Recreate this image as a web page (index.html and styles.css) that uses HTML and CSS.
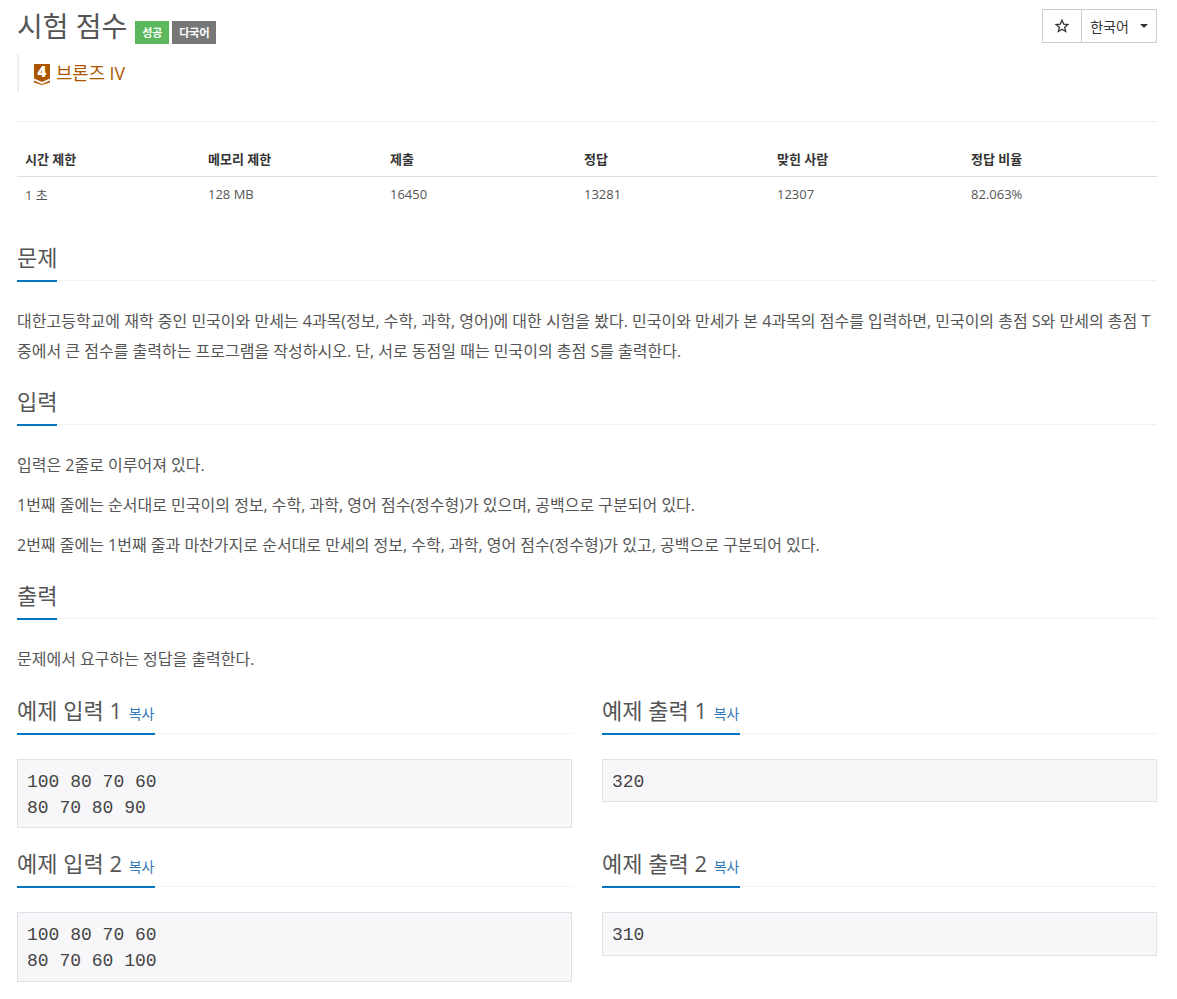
FILE: index.html
```html
<!DOCTYPE html>
<html lang="ko">
<head>
<meta charset="utf-8">
<title>시험 점수</title>
<link rel="stylesheet" href="styles.css">
</head>
<body>
<main class="page">
  <header class="top">
    <div class="title-wrap">
      <h1 class="title">시험 점수</h1>
      <span class="label label-green">성공</span>
      <span class="label label-gray">다국어</span>
    </div>
    <div class="btn-group">
      <span class="btn btn-star">
        <svg class="star" viewBox="0 0 14 14" width="14" height="14"><path d="M7 1.2 8.7 5.1 12.9 5.5 9.7 8.3 10.7 12.5 7 10.3 3.3 12.5 4.3 8.3 1.1 5.5 5.3 5.1Z" fill="none" stroke="#333" stroke-width="1.3"/></svg>
      </span>
      <span class="btn btn-lang">한국어<span class="caret"></span></span>
    </div>
  </header>
  <blockquote class="tier">
    <svg class="tier-icon" viewBox="0 0 16 21" width="16" height="21"><path d="M0 0H16V14.5L8 18 0 14.5Z" fill="#ad5600"/><path d="M0 16.5 8 20 16 16.5V18.5L8 21 0 18.5Z" fill="#ad5600"/></svg>
    <span class="tier-num">4</span>
    <span class="tier-name">브론즈 IV</span>
  </blockquote>
  <hr class="rule">
  <table class="info">
    <thead>
      <tr><th class="c1">시간 제한</th><th class="c2">메모리 제한</th><th class="c3">제출</th><th class="c4">정답</th><th class="c5">맞힌 사람</th><th class="c6">정답 비율</th></tr>
    </thead>
    <tbody>
      <tr><td>1 초</td><td>128 MB</td><td>16450</td><td>13281</td><td>12307</td><td>82.063%</td></tr>
    </tbody>
  </table>

  <section class="section first">
    <div class="headline"><h2>문제</h2></div>
    <p>대한고등학교에 재학 중인 민국이와 만세는 4과목(정보, 수학, 과학, 영어)에 대한 시험을 봤다. 민국이와 만세가 본 4과목의 점수를 입력하면, 민국이의 총점 S와 만세의 총점 T 중에서 큰 점수를 출력하는 프로그램을 작성하시오. 단, 서로 동점일 때는 민국이의 총점 S를 출력한다.</p>
  </section>
  <section class="section">
    <div class="headline"><h2>입력</h2></div>
    <p>입력은 2줄로 이루어져 있다.</p>
    <p>1번째 줄에는 순서대로 민국이의 정보, 수학, 과학, 영어 점수(정수형)가 있으며, 공백으로 구분되어 있다.</p>
    <p>2번째 줄에는 1번째 줄과 마찬가지로 순서대로 만세의 정보, 수학, 과학, 영어 점수(정수형)가 있고, 공백으로 구분되어 있다.</p>
  </section>
  <section class="section">
    <div class="headline"><h2>출력</h2></div>
    <p>문제에서 요구하는 정답을 출력한다.</p>
  </section>

  <div class="samples">
    <section class="sample">
      <div class="headline"><h2>예제 입력 1 <a class="copy">복사</a></h2></div>
      <pre>100 80 70 60
80 70 80 90</pre>
    </section>
    <section class="sample">
      <div class="headline"><h2>예제 출력 1 <a class="copy">복사</a></h2></div>
      <pre>320</pre>
    </section>
    <section class="sample">
      <div class="headline"><h2>예제 입력 2 <a class="copy">복사</a></h2></div>
      <pre>100 80 70 60
80 70 60 100</pre>
    </section>
    <section class="sample">
      <div class="headline"><h2>예제 출력 2 <a class="copy">복사</a></h2></div>
      <pre>310</pre>
    </section>
  </div>
</main>
</body>
</html>
```
FILE: styles.css
```css
* { box-sizing: border-box; }
html, body { margin: 0; padding: 0; background: #fff; }
body {
  font-family: "Open Sans", "Noto Sans CJK KR", sans-serif;
  font-size: 14px;
  color: #333;
  overflow: hidden;
}
.page { width: 1140px; margin-left: 17px; height: 999px; overflow: hidden; }

.top { display: flex; justify-content: space-between; align-items: flex-start; padding-top: 9px; height: 54px; }
.title-wrap { display: flex; align-items: flex-start; }
.title { margin: 0; font-size: 28px; font-weight: 400; line-height: 34px; color: #555; }
.label { font-size: 11px; font-weight: 700; color: #fff; height: 23px; line-height: 23px; text-align: center; margin-top: 12px; }
.label-green { background: #5cb85c; width: 34px; margin-left: 8px; }
.label-gray { background: #777; width: 44px; margin-left: 3px; }

.btn-group { display: flex; height: 34px; border: 1px solid #ccc; background: #fff; }
.btn { display: flex; align-items: center; justify-content: center; color: #333; }
.btn-star { width: 39px; border-right: 1px solid #ccc; }
.btn-lang { width: 74px; gap: 11px; }
.caret { width: 0; height: 0; border-top: 4px solid #333; border-left: 4px solid transparent; border-right: 4px solid transparent; }

.tier { position: relative; margin: 0; height: 38px; border-left: 2px solid #eee; padding-left: 15px; display: flex; align-items: flex-start; padding-top: 10px; }
.tier-icon { display: block; }
.tier-num { position: absolute; left: 15px; top: 9px; width: 16px; text-align: center; font-size: 15px; font-weight: 800; line-height: 17px; color: #fff; }
.tier-name { margin-left: 6px; margin-top: -1px; font-size: 17.75px; line-height: 20px; color: #ad5600; }

.rule { margin: 29px 0 0; border: 0; border-top: 1px solid #eee; height: 1px; }

.info { width: 100%; table-layout: fixed; border-collapse: collapse; margin-top: 20px; }
.info th, .info td { text-align: left; padding: 0 8px; font-size: 13px; }
.info th { font-weight: 700; color: #333; height: 34px; border-bottom: 1px solid #ddd; vertical-align: middle; }
.info td { height: 36px; color: #555; vertical-align: middle; }
.c1 { width: 183px; } .c2 { width: 182px; } .c3 { width: 194px; } .c4 { width: 193px; } .c5 { width: 194px; } .c6 { width: 194px; }

.headline { position: relative; height: 37px; border-bottom: 1px dotted #e5e5e5; }
.headline h2 { position: absolute; left: 0; top: 0; height: 38px; margin: 0; font-size: 22px; font-weight: 400; line-height: 26px; color: #555; border-bottom: 2px solid #0076c0; white-space: nowrap; }
.section { margin-top: 22px; }
.section.first { margin-top: 32px; }
.section .headline { margin-bottom: 25px; }
.section p { margin: 0 0 10px; font-size: 16px; line-height: 30px; color: #555; }

.samples { display: grid; grid-template-columns: 555px 555px; column-gap: 30px; row-gap: 22px; margin-top: 23px; align-items: start; }
.sample .headline { margin-bottom: 25px; }
.copy { font-size: 14px; color: #337ab7; margin-left: 1px; margin-right: 1px; }
pre { margin: 0; padding: 9px 9px 6px; border: 1px solid #e1e1e8; background: #f7f7f9; font-family: "Liberation Mono", monospace; font-size: 18px; line-height: 26px; color: #444; }
.sample:nth-child(n+3) pre { padding-bottom: 7px; }
```
